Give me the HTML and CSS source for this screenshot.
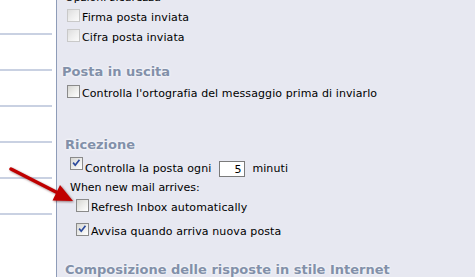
FILE: index.html
```html
<!DOCTYPE html>
<html lang="it">
<head>
<meta charset="utf-8">
<title>Opzioni posta</title>
<link rel="stylesheet" href="styles.css">
</head>
<body>
<div class="app">
  <nav class="side">
    <div class="nav-list">
      <div class="nav-item"></div>
      <div class="nav-item"></div>
      <div class="nav-item"></div>
      <div class="nav-item"></div>
      <div class="nav-item"></div>
      <div class="nav-item"></div>
    </div>
  </nav>
  <main class="pane">
    <div class="cut">Opzioni sicurezza</div>
    <div class="row row-first"><span class="cb cb-off"></span><span class="lbl lbl-off">Firma posta inviata</span></div>
    <div class="row row-second"><span class="cb cb-off"></span><span class="lbl lbl-off">Cifra posta inviata</span></div>

    <h2 class="head head-out">Posta in uscita</h2>
    <div class="row row-spell"><span class="cb"></span><span class="lbl">Controlla l'ortografia del messaggio prima di inviarlo</span></div>

    <h2 class="head head-in">Ricezione</h2>
    <div class="row row-check">
      <span class="cb"><svg class="tick" viewBox="0 0 13 13" width="11" height="11"><path d="M2.5 5.5 L5 8.5 L10 2" fill="none" stroke="#2c4a9c" stroke-width="2"/></svg></span>
      <span class="lbl lbl-low">Controlla la posta ogni</span>
      <input class="num" type="text" value="5">
      <span class="lbl lbl-low lbl-unit">minuti</span>
    </div>
    <div class="note">When new mail arrives:</div>
    <div class="row row-refresh"><span class="cb"></span><span class="lbl lbl-mid">Refresh Inbox automatically</span></div>
    <div class="row row-notify"><span class="cb"><svg class="tick" viewBox="0 0 13 13" width="11" height="11"><path d="M2.5 5.5 L5 8.5 L10 2" fill="none" stroke="#2c4a9c" stroke-width="2"/></svg></span><span class="lbl lbl-mid">Avvisa quando arriva nuova posta</span></div>

    <h2 class="head head-compose">Composizione delle risposte in stile Internet</h2>
  </main>
  <svg class="arrow" viewBox="0 0 100 220" width="100" height="220">
    <line x1="11" y1="169" x2="58" y2="193" stroke="#c00000" stroke-width="3.5" stroke-linecap="round"/>
    <polygon points="73,201 52.5,200.5 60,185" fill="#c00000"/>
  </svg>
</div>
</body>
</html>
```

FILE: styles.css
```css
html, body {
  margin: 0;
  padding: 0;
  background: #ffffff;
}

body {
  font-family: "DejaVu Sans", Verdana, sans-serif;
  font-size: 11px;
  color: #000000;
}

.app {
  position: relative;
  display: flex;
  width: 475px;
  height: 277px;
  overflow: hidden;
}

/* left navigation column */
.side {
  flex: none;
  width: 56px;
  background: #ffffff;
  overflow: hidden;
}

.nav-list {
  margin-top: -1px;
}

.nav-item {
  width: 52px;
  height: 34px;
  border-bottom: 2px solid #c9d1e2;
}

/* settings pane */
.pane {
  flex: 1;
  min-width: 0;
  overflow: hidden;
  background: #e7e8f1;
  border-left: 1px solid #8e9cb8;
  padding-left: 10px;
}

.cut {
  line-height: 13px;
  margin-top: -9px;
  margin-left: -2px;
}

.row {
  display: flex;
  align-items: flex-start;
  white-space: nowrap;
}

.row-first { margin-top: 5px; }
.row-second { margin-top: 5px; }
.row-spell { margin-top: 5px; }
.row-check { margin-top: 4px; margin-left: 3px; }
.row-refresh { margin-top: 5px; margin-left: 9px; }
.row-notify { margin-top: 9px; margin-left: 9px; }

.cb {
  flex: none;
  box-sizing: border-box;
  width: 13px;
  height: 13px;
  border: 1px solid #8a8a8a;
  background: linear-gradient(135deg, #d6d6d2 0%, #ececea 50%, #ffffff 100%);
  display: flex;
  align-items: center;
  justify-content: center;
}

.cb-off {
  border-color: #c9c9c9;
  background: linear-gradient(135deg, #dedede 0%, #eeeeee 50%, #fbfbfb 100%);
}

.tick {
  display: block;
}

.lbl {
  line-height: 13px;
  margin-top: 2px;
  margin-left: 2px;
  letter-spacing: 0.1px;
}

.lbl-low { margin-top: 5px; }
.lbl-mid { margin-top: 2px; }
.lbl-unit { margin-left: 7px; }

.num {
  flex: none;
  box-sizing: border-box;
  width: 26px;
  height: 16px;
  margin: 4px 0 0 8px;
  padding: 0 3px 0 0;
  border: 1px solid #7a7a7a;
  background: #ffffff;
  font-family: "DejaVu Sans", Verdana, sans-serif;
  font-size: 11px;
  color: #000000;
  text-align: right;
  outline: none;
}

.note {
  line-height: 13px;
  margin-top: 4px;
  margin-left: 3px;
  white-space: nowrap;
}

.head {
  margin: 0;
  font-size: 13px;
  font-weight: bold;
  line-height: 16px;
  color: #8290a9;
  white-space: nowrap;
  text-shadow: 0 0 2px #f8f9fc, 0 0 3px #f8f9fc;
}

.head-out { margin-top: 20px; margin-left: -5px; }
.head-in { margin-top: 37px; margin-left: -2px; }
.head-compose { margin-top: 24px; margin-left: -2px; }

/* annotation arrow overlay */
.arrow {
  position: absolute;
  left: 0;
  top: 0;
  pointer-events: none;
  filter: drop-shadow(1px 1px 1px rgba(60, 0, 0, 0.5));
}
```
